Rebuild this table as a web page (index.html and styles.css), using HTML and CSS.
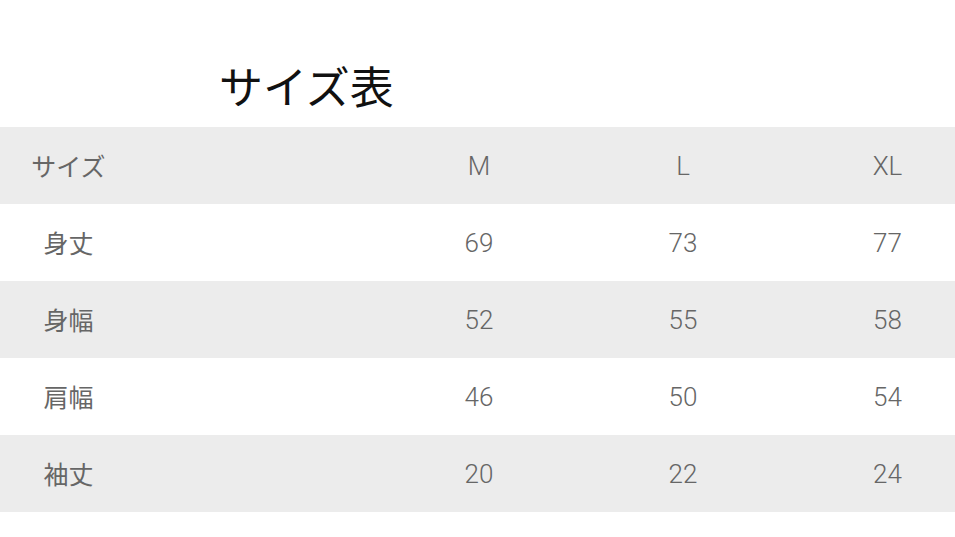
FILE: index.html
```html
<!DOCTYPE html>
<html lang="ja">
<head>
<meta charset="utf-8">
<link rel="stylesheet" href="styles.css">
</head>
<body>
<div class="page">
  <h1 class="title">サイズ表</h1>
  <div class="table">
    <div class="row gray">
      <div class="cell first">サイズ</div><div class="cell spacer"></div>
      <div class="cell">M</div><div class="cell">L</div><div class="cell last">XL</div>
    </div>
    <div class="row">
      <div class="cell first">身丈</div><div class="cell spacer"></div>
      <div class="cell">69</div><div class="cell">73</div><div class="cell last">77</div>
    </div>
    <div class="row gray">
      <div class="cell first">身幅</div><div class="cell spacer"></div>
      <div class="cell">52</div><div class="cell">55</div><div class="cell last">58</div>
    </div>
    <div class="row">
      <div class="cell first">肩幅</div><div class="cell spacer"></div>
      <div class="cell">46</div><div class="cell">50</div><div class="cell last">54</div>
    </div>
    <div class="row gray">
      <div class="cell first">袖丈</div><div class="cell spacer"></div>
      <div class="cell">20</div><div class="cell">22</div><div class="cell last">24</div>
    </div>
  </div>
</div>
</body>
</html>
```

FILE: styles.css
```css
html, body {
  margin: 0;
  padding: 0;
  background: #ffffff;
}
.page {
  width: 955px;
  height: 537px;
  overflow: hidden;
  font-family: Roboto, "Noto Sans CJK JP", sans-serif;
}
.title {
  margin: 0;
  padding: 44px 0 0 219px;
  font-family: "Noto Sans CJK JP", sans-serif;
  font-weight: 400;
  font-size: 44px;
  line-height: 83px;
  color: #111111;
}
.table {
  display: flex;
  flex-direction: column;
}
.row {
  display: grid;
  grid-template-columns: 137px 240px 204px 204px 170px;
  height: 77px;
  align-items: center;
  color: #666666;
  font-size: 26px;
  font-weight: 300;
}
.row.gray {
  background: #ececec;
}
.cell {
  text-align: center;
}
.cell.first {
  font-family: "Noto Sans CJK JP", sans-serif;
  font-weight: 400;
  font-size: 25px;
  margin-top: -2px;
}
.cell.last {
  padding-left: 35px;
}
```
